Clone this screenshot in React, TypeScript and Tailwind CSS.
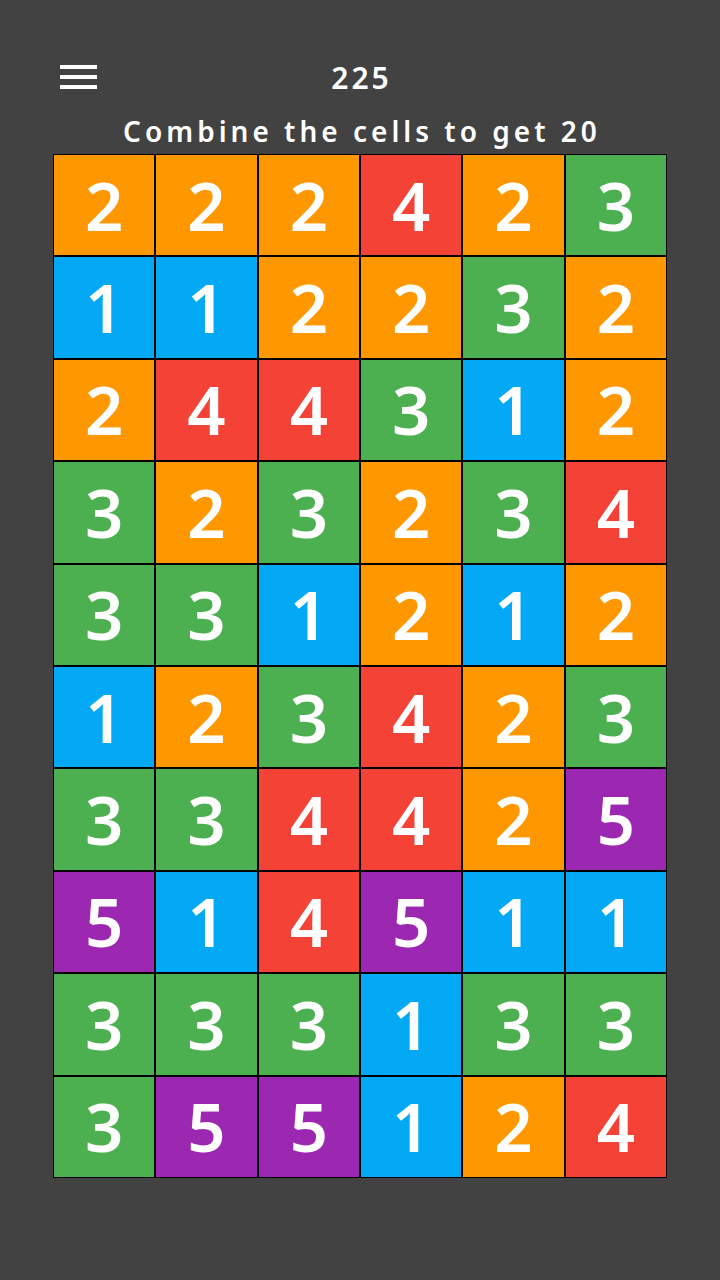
import React from "react";

const board: number[][] = [
  [2, 2, 2, 4, 2, 3],
  [1, 1, 2, 2, 3, 2],
  [2, 4, 4, 3, 1, 2],
  [3, 2, 3, 2, 3, 4],
  [3, 3, 1, 2, 1, 2],
  [1, 2, 3, 4, 2, 3],
  [3, 3, 4, 4, 2, 5],
  [5, 1, 4, 5, 1, 1],
  [3, 3, 3, 1, 3, 3],
  [3, 5, 5, 1, 2, 4],
];

const colorFor: Record<number, string> = {
  1: "bg-[#03A9F4]",
  2: "bg-[#FF9800]",
  3: "bg-[#4CAF50]",
  4: "bg-[#F44336]",
  5: "bg-[#9C27B0]",
};

export default function App() {
  return (
    <div
      className="w-[720px] h-[1280px] bg-[#424242] flex flex-col items-center text-white"
      style={{ fontFamily: '"Noto Sans", sans-serif' }}
    >
      <div className="w-full grid grid-cols-[1fr_auto_1fr] pt-[60px] h-[96px]">
        <div className="pl-[60px]">
          <div className="mt-[5px] w-[37px] h-[24px] flex flex-col justify-between">
            <div className="h-[4px] bg-white" />
            <div className="h-[4px] bg-white" />
            <div className="h-[4px] bg-white" />
          </div>
        </div>
        <div className="text-[30px] leading-[36px] font-semibold tracking-[3px] pl-[3px]">225</div>
        <div />
      </div>
      <div className="mt-[18px] text-[28px] leading-[34px] font-semibold tracking-[4px] pl-[4px]">
        Combine the cells to get 20
      </div>
      <div className="mt-[6px] w-[614px] grid grid-cols-6">
        {board.flat().map((v, i) => (
          <div
            key={i}
            className={`h-[102.4px] border border-black flex items-center justify-center ${colorFor[v]}`}
          >
            <span className="text-[67px] leading-none font-semibold">{v}</span>
          </div>
        ))}
      </div>
    </div>
  );
}
